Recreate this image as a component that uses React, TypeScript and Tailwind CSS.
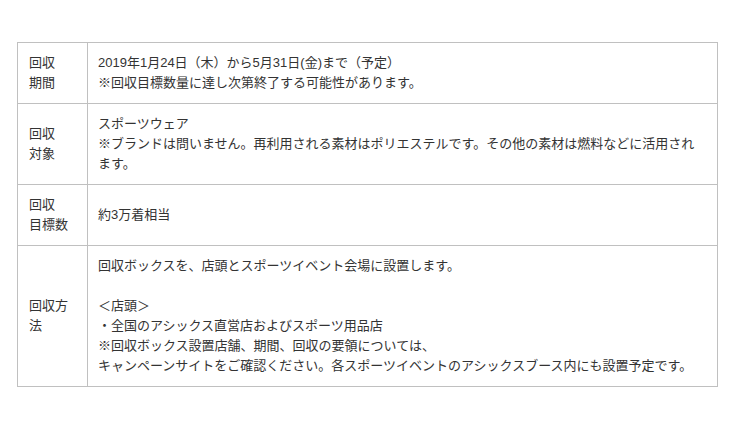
const rows: { label: string[]; lines: string[] }[] = [
  {
    label: ['回収', '期間'],
    lines: ['2019年1月24日（木）から5月31日(金)まで（予定）', '※回収目標数量に達し次第終了する可能性があります。'],
  },
  {
    label: ['回収', '対象'],
    lines: [
      'スポーツウェア',
      '※ブランドは問いません。再利用される素材はポリエステルです。その他の素材は燃料などに活用されます。',
    ],
  },
  {
    label: ['回収', '目標数'],
    lines: ['約3万着相当'],
  },
  {
    label: ['回収方', '法'],
    lines: [
      '回収ボックスを、店頭とスポーツイベント会場に設置します。',
      '',
      '＜店頭＞',
      '・全国のアシックス直営店およびスポーツ用品店',
      '※回収ボックス設置店舗、期間、回収の要領については、',
      'キャンペーンサイトをご確認ください。各スポーツイベントのアシックスブース内にも設置予定です。',
    ],
  },
];

export default function App() {
  return (
    <div
      className="min-h-[427px] bg-white pt-[42px] pl-[17px] text-[13px] leading-[20px] text-[#333]"
      style={{ fontFamily: '"Liberation Sans", "Noto Sans CJK JP", sans-serif' }}
    >
      <table className="w-[701px] border-collapse border border-[#c0c0c0]">
        <tbody>
          {rows.map((row, i) => (
            <tr key={i} className="border-b border-[#c0c0c0]">
              <td className="w-[70px] border-r border-[#c0c0c0] px-[11px] py-[10px] align-middle">
                {row.label.map((l, j) => (
                  <div key={j}>{l}</div>
                ))}
              </td>
              <td className="px-[10px] py-[10px] align-middle">
                {row.lines.map((l, j) => (
                  <div key={j} className="min-h-[20px]">
                    {l}
                  </div>
                ))}
              </td>
            </tr>
          ))}
        </tbody>
      </table>
    </div>
  );
}
